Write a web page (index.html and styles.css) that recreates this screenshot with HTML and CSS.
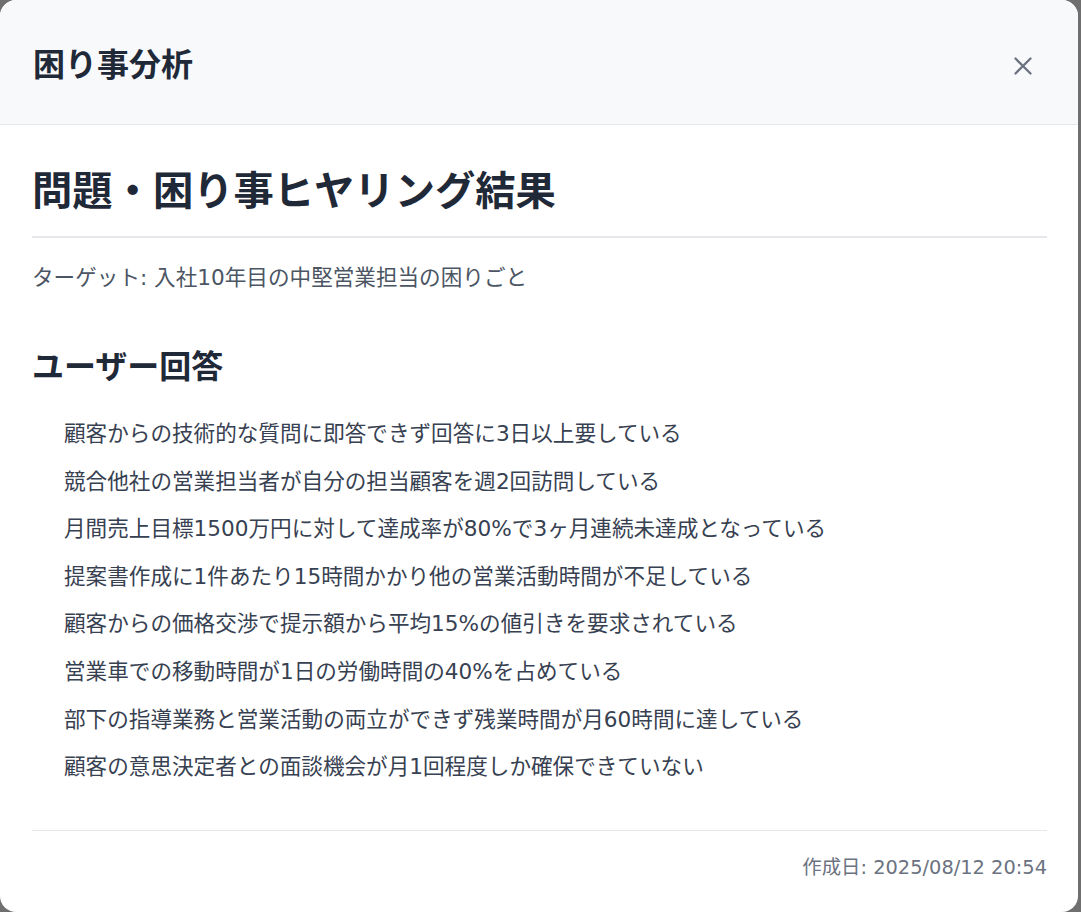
FILE: index.html
```html
<!DOCTYPE html>
<html lang="ja">
<head>
<meta charset="utf-8">
<title>困り事分析</title>
<link rel="stylesheet" href="styles.css">
</head>
<body>
<div class="modal">
  <header class="modal-header">
    <h2 class="modal-title">困り事分析</h2>
    <button class="close-btn" aria-label="閉じる">
      <svg width="20" height="20" viewBox="0 0 20 20" fill="none" stroke="currentColor" stroke-width="2.3" stroke-linecap="round"><path d="M2.5 2.5L17.5 17.5M17.5 2.5L2.5 17.5"/></svg>
    </button>
  </header>
  <main class="modal-body">
    <h1 class="report-title">問題・困り事ヒヤリング結果</h1>
    <p class="target">ターゲット: 入社10年目の中堅営業担当の困りごと</p>
    <h3 class="section-title">ユーザー回答</h3>
    <ul class="answers">
      <li>顧客からの技術的な質問に即答できず回答に3日以上要している</li>
      <li>競合他社の営業担当者が自分の担当顧客を週2回訪問している</li>
      <li>月間売上目標1500万円に対して達成率が80%で3ヶ月連続未達成となっている</li>
      <li>提案書作成に1件あたり15時間かかり他の営業活動時間が不足している</li>
      <li>顧客からの価格交渉で提示額から平均15%の値引きを要求されている</li>
      <li>営業車での移動時間が1日の労働時間の40%を占めている</li>
      <li>部下の指導業務と営業活動の両立ができず残業時間が月60時間に達している</li>
      <li>顧客の意思決定者との面談機会が月1回程度しか確保できていない</li>
    </ul>
    <footer class="report-footer">作成日: 2025/08/12 20:54</footer>
  </main>
</div>
</body>
</html>
```

FILE: styles.css
```css
* { box-sizing: border-box; }
html, body { margin: 0; padding: 0; }
body {
  background: #6f6f6f;
  font-family: "DejaVu Sans", "Noto Sans CJK JP", sans-serif;
  width: 1081px;
  height: 912px;
  overflow: hidden;
}
.modal {
  width: 1078px;
  height: 912px;
  background: #ffffff;
  border-radius: 16px;
  overflow: hidden;
  display: flex;
  flex-direction: column;
}
.modal-header {
  height: 125px;
  flex: none;
  background: #f8f9fb;
  border-bottom: 1px solid #e5e7eb;
  display: flex;
  align-items: center;
  justify-content: space-between;
  padding: 0 41px 0 33px;
}
.modal-title,
.report-title,
.section-title {
  font-family: "Noto Sans CJK JP", "Noto Sans", sans-serif;
  font-weight: 700;
  color: #1f2937;
}
.modal-title {
  margin: 0;
  font-size: 32px;
  line-height: 40px;
}
.close-btn {
  border: 0;
  background: transparent;
  padding: 4px;
  color: #6b7280;
  display: flex;
  align-items: center;
  justify-content: center;
  margin-top: 8px;
}
.modal-body {
  padding: 39px 31px 0 32px;
  display: flex;
  flex-direction: column;
}
.report-title {
  margin: 0;
  font-size: 40.3px;
  line-height: 48px;
  padding-bottom: 24px;
  border-bottom: 2px solid #e5e7eb;
}
.target {
  margin: 23px 0 0;
  font-size: 21.6px;
  line-height: 33px;
  color: #4b5563;
}
.section-title {
  margin: 50px 0 0;
  font-size: 32px;
  line-height: 40px;
}
.answers {
  list-style: none;
  margin: 32px 0 0;
  padding: 0 0 0 32px;
}
.answers li {
  font-size: 21.6px;
  line-height: 36px;
  color: #374151;
  margin-bottom: 11.6px;
}
.answers li:last-child { margin-bottom: 0; }
.report-footer {
  margin-top: 45px;
  border-top: 1px solid #e5e7eb;
  padding-top: 23px;
  text-align: right;
  font-size: 19.4px;
  line-height: 28px;
  color: #6b7280;
}
```
